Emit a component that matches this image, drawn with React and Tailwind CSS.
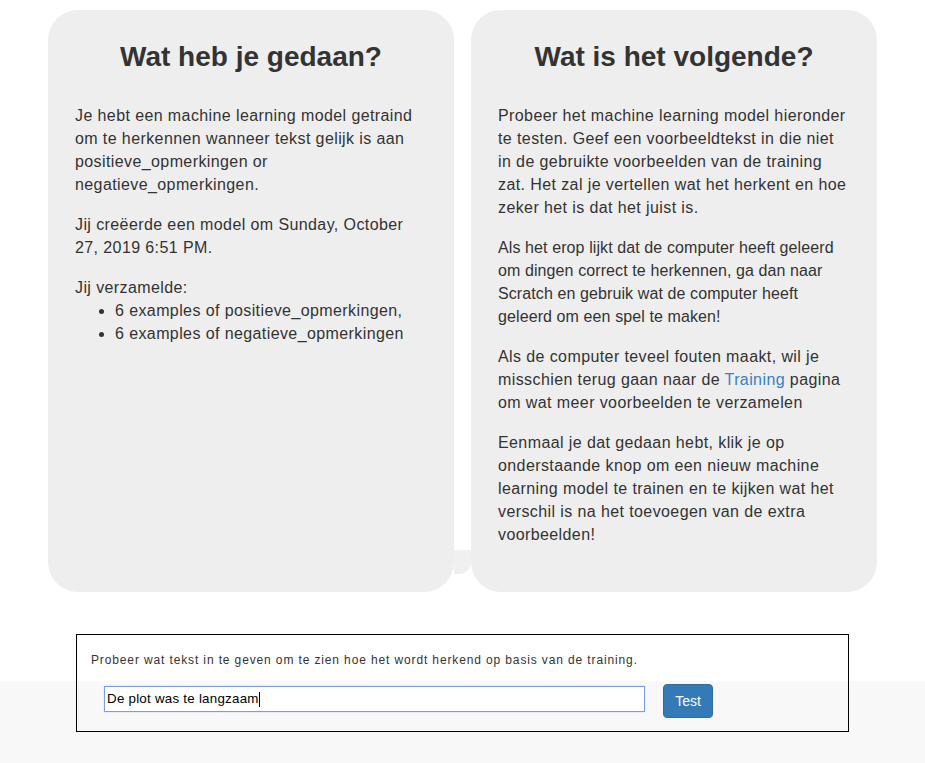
export default function App() {
  return (
    <div className="min-h-[763px] bg-[linear-gradient(to_bottom,#ffffff_681px,#f8f8f8_681px)] font-['Liberation_Sans',Arial,sans-serif] text-[#333333]">
      <div className="relative mx-auto flex w-[829px] gap-[17px] pt-[10px]">
        <div className="h-[582px] w-[406px] rounded-[30px] bg-[#eeeeee] px-[27px] pt-[32px]">
          <h2 className="mb-[31px] text-center text-[28px] font-bold leading-[1.1]">Wat heb je gedaan?</h2>
          <div className="w-[352px] text-[16px] leading-[23px] tracking-[0.4px]">
            <p className="mb-[17px]">
              Je hebt een machine learning model getraind om te herkennen wanneer tekst gelijk is aan positieve_opmerkingen or negatieve_opmerkingen.
            </p>
            <p className="mb-[17px]">Jij creëerde een model om Sunday, October 27, 2019 6:51 PM.</p>
            <p>Jij verzamelde:</p>
            <ul className="list-disc pl-[40px]">
              <li>6 examples of positieve_opmerkingen,</li>
              <li>6 examples of negatieve_opmerkingen</li>
            </ul>
          </div>
        </div>

        <div className="h-[582px] w-[406px] rounded-[30px] bg-[#eeeeee] px-[27px] pt-[32px]">
          <h2 className="mb-[31px] text-center text-[28px] font-bold leading-[1.1]">Wat is het volgende?</h2>
          <div className="w-[352px] text-[16px] leading-[23px] tracking-[0.4px]">
            <p className="mb-[17px]">
              Probeer het machine learning model hieronder te testen. Geef een voorbeeldtekst in die niet in de gebruikte voorbeelden van de training zat. Het zal je vertellen wat het herkent en hoe zeker het is dat het juist is.
            </p>
            <p className="mb-[17px] tracking-[0.1px]">
              Als het erop lijkt dat de computer heeft geleerd om dingen correct te herkennen, ga dan naar Scratch en gebruik wat de computer heeft geleerd om een spel te maken!
            </p>
            <p className="mb-[17px]">
              Als de computer teveel fouten maakt, wil je misschien terug gaan naar de{" "}
              <a href="#" className="text-[#3a7fc1]">Training</a> pagina om wat meer voorbeelden te verzamelen
            </p>
            <p>
              Eenmaal je dat gedaan hebt, klik je op onderstaande knop om een nieuw machine learning model te trainen en te kijken wat het verschil is na het toevoegen van de extra voorbeelden!
            </p>
          </div>
        </div>

        {/* faint connector between the two bubbles */}
        <div className="absolute left-[406px] top-[550px] h-[24px] w-[17px] rounded-br-[12px] bg-[#f0f0f0]" />
      </div>

      <div className="mx-auto mt-[42px] w-[773px] border border-black px-[14px] pb-[13px] pt-[17px]">
        <p className="text-[12px] leading-[17px] tracking-[0.87px]">
          Probeer wat tekst in te geven om te zien hoe het wordt herkend op basis van de training.
        </p>
        <div className="ml-[13px] mt-[15px] flex items-start">
          <div className="mt-[2px] flex h-[26px] w-[541px] items-center border border-[#7a9fdf] bg-white px-[2px] text-[13.33px] tracking-[0.25px] text-black shadow-[0_0_1px_#9ab8ec]">
            <span>De plot was te langzaam</span>
            <span className="h-[15px] w-px bg-black" />
          </div>
          <button className="ml-[18px] h-[34px] w-[50px] rounded-[4px] border border-[#2e6da4] bg-[#337ab7] text-[14px] leading-[20px] text-white">
            Test
          </button>
        </div>
      </div>
    </div>
  );
}
